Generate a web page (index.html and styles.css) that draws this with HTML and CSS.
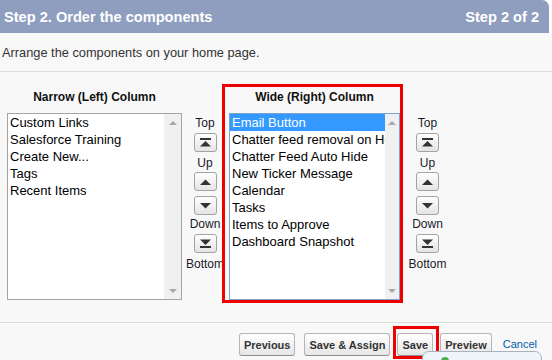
FILE: index.html
```html
<!DOCTYPE html>
<html>
<head>
<meta charset="utf-8">
<link rel="stylesheet" href="styles.css">
</head>
<body>
<div class="page">
  <div class="header-wrap">
    <div class="header">
      <span class="header-title">Step 2. Order the components</span>
      <span class="header-step">Step 2 of 2</span>
    </div>
  </div>
  <div class="intro">Arrange the components on your home page.</div>

  <div class="columns">
    <div class="col col-left">
      <div class="col-title">Narrow (Left) Column</div>
      <div class="listbox listbox-left">
        <ul class="options">
          <li>Custom Links</li>
          <li>Salesforce Training</li>
          <li>Create New...</li>
          <li>Tags</li>
          <li>Recent Items</li>
        </ul>
        <div class="vscroll vscroll-wide"><span class="arr arr-up"></span><span class="arr arr-down"></span></div>
      </div>
    </div>

    <div class="movers movers-left">
      <span class="mv-label">Top</span>
      <button class="mv-btn mv-first"><svg width="11" height="9" viewBox="0 0 11 9"><rect x="0" y="0" width="11" height="2" fill="#333"/><polygon points="0,8.5 5.5,3 11,8.5" fill="#333"/></svg></button>
      <span class="mv-label mv-up">Up</span>
      <button class="mv-btn mv-second"><svg width="11" height="6" viewBox="0 0 11 6"><polygon points="0,6 5.5,0.5 11,6" fill="#333"/></svg></button>
      <button class="mv-btn mv-third"><svg width="11" height="6" viewBox="0 0 11 6"><polygon points="0,0 5.5,5.5 11,0" fill="#333"/></svg></button>
      <span class="mv-label mv-down">Down</span>
      <button class="mv-btn mv-fourth"><svg width="11" height="9" viewBox="0 0 11 9"><polygon points="0,0.5 5.5,6 11,0.5" fill="#333"/><rect x="0" y="7" width="11" height="2" fill="#333"/></svg></button>
      <span class="mv-label mv-bottom">Bottom</span>
    </div>

    <div class="col col-right">
      <div class="col-title">Wide (Right) Column</div>
      <div class="listbox listbox-right">
        <ul class="options">
          <li class="selected">Email Button</li>
          <li>Chatter feed removal on Home Page</li>
          <li>Chatter Feed Auto Hide</li>
          <li>New Ticker Message</li>
          <li>Calendar</li>
          <li>Tasks</li>
          <li>Items to Approve</li>
          <li>Dashboard Snapshot</li>
        </ul>
        <div class="vscroll vscroll-narrow"><span class="arr arr-up"></span><span class="arr arr-down"></span></div>
      </div>
      <div class="annot annot-column"></div>
    </div>

    <div class="movers movers-right">
      <span class="mv-label">Top</span>
      <button class="mv-btn mv-first"><svg width="11" height="9" viewBox="0 0 11 9"><rect x="0" y="0" width="11" height="2" fill="#333"/><polygon points="0,8.5 5.5,3 11,8.5" fill="#333"/></svg></button>
      <span class="mv-label mv-up">Up</span>
      <button class="mv-btn mv-second"><svg width="11" height="6" viewBox="0 0 11 6"><polygon points="0,6 5.5,0.5 11,6" fill="#333"/></svg></button>
      <button class="mv-btn mv-third"><svg width="11" height="6" viewBox="0 0 11 6"><polygon points="0,0 5.5,5.5 11,0" fill="#333"/></svg></button>
      <span class="mv-label mv-down">Down</span>
      <button class="mv-btn mv-fourth"><svg width="11" height="9" viewBox="0 0 11 9"><polygon points="0,0.5 5.5,6 11,0.5" fill="#333"/><rect x="0" y="7" width="11" height="2" fill="#333"/></svg></button>
      <span class="mv-label mv-bottom">Bottom</span>
    </div>
  </div>

  <div class="footer">
    <button class="btn">Previous</button>
    <button class="btn btn-gap">Save &amp; Assign</button>
    <span class="save-wrap"><button class="btn">Save</button><span class="annot annot-save"></span></span>
    <button class="btn">Preview</button>
    <a class="cancel" href="#">Cancel</a>
    <div class="popup"><span class="popup-dot"></span></div>
  </div>
</div>
</body>
</html>
```

FILE: styles.css
```css
* { box-sizing: border-box; }

html, body {
  margin: 0;
  padding: 0;
  background: #f8f8f8;
  font-family: "Liberation Sans", Arial, sans-serif;
  overflow: hidden;
}

.page {
  width: 552px;
  height: 360px;
  position: relative;
  overflow: hidden;
}

.header-wrap {
  background: #ffffff;
}

.header {
  height: 33px;
  margin-right: 3px;
  background: #8f9ebf;
  border-top-right-radius: 7px;
  display: flex;
  align-items: center;
  justify-content: space-between;
  padding: 0 10px 0 4px;
  color: #ffffff;
  font-weight: bold;
  font-size: 14.6px;
}

.intro {
  padding: 12px 0 10px 2px;
  line-height: 16px;
  font-size: 12.8px;
  color: #333;
  border-bottom: 1px solid #dcdcdc;
}

.columns {
  display: flex;
  padding: 17px 0 22px 7px;
  border-bottom: 1px solid #dcdcdc;
}

.col-left { width: 175px; }
.col-right { width: 171px; position: relative; }

.col-title {
  text-align: center;
  font-weight: bold;
  font-size: 12px;
  line-height: 16px;
  color: #111;
  margin-bottom: 8px;
}

.listbox {
  height: 187px;
  display: flex;
  background: #fff;
}

.listbox-left { border: 1px solid #a5a5a5; }
.listbox-right { border: 1px solid #7ea3d0; }

.options {
  list-style: none;
  margin: 0;
  padding: 0;
  flex: 1;
  overflow: hidden;
  font-size: 13px;
  color: #000;
}

.options li {
  line-height: 17px;
  height: 17px;
  padding-left: 2px;
  white-space: nowrap;
  overflow: hidden;
}

.options li.selected {
  background: #3399ff;
  color: #fff;
}

.vscroll {
  background: #f0f0f0;
  display: flex;
  flex-direction: column;
  justify-content: space-between;
  align-items: center;
  padding: 7px 0 6px;
}

.vscroll-wide { width: 17px; }
.vscroll-narrow { width: 14px; }

.arr {
  width: 0;
  height: 0;
  border-left: 4px solid transparent;
  border-right: 4px solid transparent;
}

.arr-up { border-bottom: 4px solid #a8a8a8; }
.arr-down { border-top: 4px solid #a8a8a8; }

.movers {
  display: flex;
  flex-direction: column;
  align-items: center;
  padding-top: 26px;
}

.movers-left { width: 47px; padding-right: 1px; }
.movers-right { width: 55px; }

.mv-label {
  font-size: 12px;
  line-height: 16px;
  color: #1a1a2a;
}

.mv-btn {
  width: 23px;
  height: 19px;
  padding: 0;
  border: 1px solid #a3a3a3;
  border-radius: 3px;
  background: linear-gradient(#ffffff, #e4e4e4);
  display: flex;
  align-items: center;
  justify-content: center;
}

.mv-first { margin-top: 2px; }
.mv-up { margin-top: 3px; }
.mv-second { margin-top: 1px; }
.mv-third { margin-top: 5px; }
.mv-down { margin-top: 1px; }
.mv-fourth { margin-top: 2px; }
.mv-bottom { margin-top: 3px; }

.annot {
  position: absolute;
  border: 3px solid #ee0000;
  pointer-events: none;
}

.annot-column {
  top: -5px;
  left: -7px;
  right: -3px;
  bottom: -3px;
}

.footer {
  position: relative;
  display: flex;
  justify-content: flex-end;
  align-items: flex-start;
  padding: 10px 15px 0 0;
  height: 37px;
}

.btn {
  height: 23px;
  padding: 0 4px;
  font-family: "Liberation Sans", Arial, sans-serif;
  font-size: 11px;
  font-weight: bold;
  color: #333;
  border: 1px solid #b5b5b5;
  border-bottom-color: #8f8f8f;
  border-radius: 3px;
  background: linear-gradient(#ffffff, #e6e6e6);
  margin-left: 7px;
}

.btn-gap { margin-left: 9px; }

.save-wrap {
  position: relative;
  display: inline-flex;
  margin-left: 7px;
}

.save-wrap .btn { margin-left: 0; }

.annot-save {
  top: -7px;
  left: -4px;
  right: -6px;
  bottom: -3px;
}

.cancel {
  margin-left: 11px;
  font-size: 11px;
  line-height: 23px;
  color: #015ba7;
  text-decoration: none;
}

.popup {
  position: absolute;
  right: 10px;
  top: 28px;
  width: 120px;
  height: 30px;
  border: 1px solid #a9b3bf;
  border-radius: 7px;
  background: #eef5fb;
}

.popup-dot {
  position: absolute;
  left: 18px;
  top: 5px;
  width: 8px;
  height: 8px;
  border-radius: 50%;
  background: #4caf50;
}
```
